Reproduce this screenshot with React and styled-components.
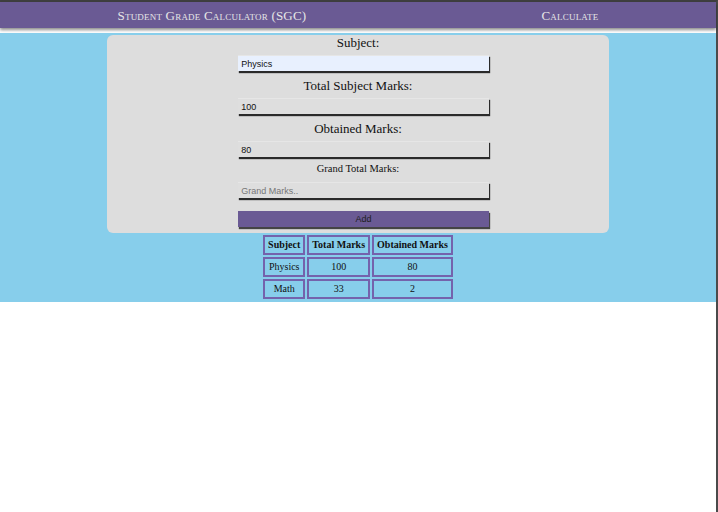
import React, { useState } from 'react'
import styled, { createGlobalStyle } from 'styled-components'

const GlobalStyle = createGlobalStyle`
  html, body {
    margin: 0;
    padding: 0;
    background: #fff;
  }
  * {
    box-sizing: border-box;
  }
`

const Page = styled.div`
  min-height: 100vh;
  border-top: 2px solid #3f3f3f;
  border-right: 2px solid #4a4a4a;
  background: #fff;
  font-family: "Liberation Serif", "Times New Roman", serif;
`

const Header = styled.header`
  height: 26px;
  background: #6a5a94;
  display: flex;
  justify-content: space-around;
  align-items: center;
  box-shadow: 0 2px 3px rgba(0, 0, 0, 0.45);
  margin-bottom: 5px;
`

const NavItem = styled.span`
  color: #e6e6e6;
  font-size: 13px;
  font-variant: small-caps;
  letter-spacing: 0.2px;
  padding-top: 1px;
`

const Main = styled.main`
  background: #87ceeb;
  padding: 2px 0 1px;
`

const Card = styled.section`
  width: 70%;
  margin: 0 auto;
  background: #dddddd;
  border-radius: 6px;
  padding: 0 0 6px;
  display: flex;
  flex-direction: column;
  align-items: center;
`

const Label = styled.label`
  display: block;
  font-size: ${(p) => (p.small ? '10.5px' : '13px')};
  line-height: ${(p) => (p.small ? '12px' : '17px')};
  color: #111;
  margin-top: ${(p) => (p.first ? '-1px' : '4px')};
  margin-bottom: ${(p) => (p.small ? '7px' : '4px')};
`

const Input = styled.input`
  width: 50%;
  height: 16px;
  margin-left: 11px;
  border: none;
  outline: none;
  padding: 0 3px;
  font-family: "Liberation Sans", Arial, sans-serif;
  font-size: 9px;
  color: #111;
  background: ${(p) => (p.filled ? '#e8f0fe' : '#dedede')};
  box-shadow: 1px 2px 1px #2a2a2a;
  border-top: 1px solid #e6e6e6;
  margin-bottom: 2px;
  &::placeholder {
    color: #777;
  }
`

const AddButton = styled.button`
  width: 50%;
  height: 16px;
  margin-top: 11px;
  margin-left: 11px;
  border: none;
  background: #6a5a94;
  color: #1d1d1d;
  font-family: "Liberation Sans", Arial, sans-serif;
  font-size: 9px;
  box-shadow: 1px 2px 1px #444;
  cursor: pointer;
`

const Table = styled.table`
  margin: 0 auto;
  border-spacing: 2px;
  font-size: 10px;
  color: #111;
`

const Cell = styled.td`
  border: 2px solid #7463ac;
  padding: 3px 3px;
  line-height: 10px;
  text-align: center;
  font-weight: ${(p) => (p.head ? 'bold' : 'normal')};
`

const fields = [
  { label: 'Subject:', value: 'Physics', filled: true },
  { label: 'Total Subject Marks:', value: '100' },
  { label: 'Obtained Marks:', value: '80' },
]

const rows = [
  ['Physics', '100', '80'],
  ['Math', '33', '2'],
]

export default function App() {
  const [grand, setGrand] = useState('')
  return (
    <>
      <GlobalStyle />
      <Page>
        <Header>
          <NavItem>Student Grade Calculator (SGC)</NavItem>
          <NavItem>Calculate</NavItem>
        </Header>
        <Main>
          <Card>
            {fields.map((f, i) => (
              <React.Fragment key={f.label}>
                <Label first={i === 0}>{f.label}</Label>
                <Input defaultValue={f.value} filled={f.filled} />
              </React.Fragment>
            ))}
            <Label small>Grand Total Marks:</Label>
            <Input
              placeholder="Grand Marks.."
              value={grand}
              onChange={(e) => setGrand(e.target.value)}
            />
            <AddButton>Add</AddButton>
          </Card>
          <Table>
            <tbody>
              <tr>
                <Cell head>Subject</Cell>
                <Cell head>Total Marks</Cell>
                <Cell head>Obtained Marks</Cell>
              </tr>
              {rows.map((r) => (
                <tr key={r[0]}>
                  {r.map((c, j) => (
                    <Cell key={j}>{c}</Cell>
                  ))}
                </tr>
              ))}
            </tbody>
          </Table>
        </Main>
      </Page>
    </>
  )
}
